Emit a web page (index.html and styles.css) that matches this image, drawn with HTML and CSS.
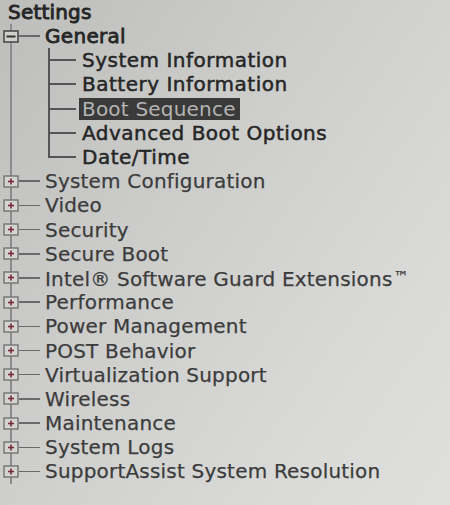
FILE: index.html
```html
<!DOCTYPE html>
<html lang="en">
<head>
<meta charset="utf-8">
<title>Settings</title>
<link rel="stylesheet" href="styles.css">
</head>
<body>
<div class="tree">
  <div class="title">Settings</div>
  <ul class="root">
    <li class="group">
      <div class="row">
        <svg class="box" width="16" height="13" viewBox="0 0 16 13"><rect x="1" y="1" width="14" height="11" fill="#cfd0ce" stroke="#4a4a4a" stroke-width="1.6"/><line x1="3.5" y1="6.5" x2="12.5" y2="6.5" stroke="#333" stroke-width="2"/></svg>
        <span class="hline"></span>
        <span class="label strong top">General</span>
      </div>
      <ul class="children">
        <li class="crow"><span class="conn"></span><span class="label strong">System Information</span></li>
        <li class="crow"><span class="conn"></span><span class="label strong">Battery Information</span></li>
        <li class="crow"><span class="conn"></span><span class="label sel">Boot Sequence</span></li>
        <li class="crow"><span class="conn"></span><span class="label strong">Advanced Boot Options</span></li>
        <li class="crow last"><span class="conn"></span><span class="label strong">Date/Time</span></li>
      </ul>
    </li>
    <li class="row"><svg class="box" width="16" height="13" viewBox="0 0 16 13"><rect x="1" y="1" width="14" height="11" fill="#d3d3d1" stroke="#737373" stroke-width="1.4"/><line x1="5" y1="6.5" x2="11" y2="6.5" stroke="#7a2a3a" stroke-width="1.6"/><line x1="8" y1="3.5" x2="8" y2="9.5" stroke="#7a2a3a" stroke-width="1.6"/></svg><span class="hline"></span><span class="label">System Configuration</span></li>
    <li class="row"><svg class="box" width="16" height="13" viewBox="0 0 16 13"><rect x="1" y="1" width="14" height="11" fill="#d3d3d1" stroke="#737373" stroke-width="1.4"/><line x1="5" y1="6.5" x2="11" y2="6.5" stroke="#7a2a3a" stroke-width="1.6"/><line x1="8" y1="3.5" x2="8" y2="9.5" stroke="#7a2a3a" stroke-width="1.6"/></svg><span class="hline"></span><span class="label">Video</span></li>
    <li class="row"><svg class="box" width="16" height="13" viewBox="0 0 16 13"><rect x="1" y="1" width="14" height="11" fill="#d3d3d1" stroke="#737373" stroke-width="1.4"/><line x1="5" y1="6.5" x2="11" y2="6.5" stroke="#7a2a3a" stroke-width="1.6"/><line x1="8" y1="3.5" x2="8" y2="9.5" stroke="#7a2a3a" stroke-width="1.6"/></svg><span class="hline"></span><span class="label">Security</span></li>
    <li class="row"><svg class="box" width="16" height="13" viewBox="0 0 16 13"><rect x="1" y="1" width="14" height="11" fill="#d3d3d1" stroke="#737373" stroke-width="1.4"/><line x1="5" y1="6.5" x2="11" y2="6.5" stroke="#7a2a3a" stroke-width="1.6"/><line x1="8" y1="3.5" x2="8" y2="9.5" stroke="#7a2a3a" stroke-width="1.6"/></svg><span class="hline"></span><span class="label">Secure Boot</span></li>
    <li class="row"><svg class="box" width="16" height="13" viewBox="0 0 16 13"><rect x="1" y="1" width="14" height="11" fill="#d3d3d1" stroke="#737373" stroke-width="1.4"/><line x1="5" y1="6.5" x2="11" y2="6.5" stroke="#7a2a3a" stroke-width="1.6"/><line x1="8" y1="3.5" x2="8" y2="9.5" stroke="#7a2a3a" stroke-width="1.6"/></svg><span class="hline"></span><span class="label">Intel® Software Guard Extensions<span class="tm">™</span></span></li>
    <li class="row"><svg class="box" width="16" height="13" viewBox="0 0 16 13"><rect x="1" y="1" width="14" height="11" fill="#d3d3d1" stroke="#737373" stroke-width="1.4"/><line x1="5" y1="6.5" x2="11" y2="6.5" stroke="#7a2a3a" stroke-width="1.6"/><line x1="8" y1="3.5" x2="8" y2="9.5" stroke="#7a2a3a" stroke-width="1.6"/></svg><span class="hline"></span><span class="label">Performance</span></li>
    <li class="row"><svg class="box" width="16" height="13" viewBox="0 0 16 13"><rect x="1" y="1" width="14" height="11" fill="#d3d3d1" stroke="#737373" stroke-width="1.4"/><line x1="5" y1="6.5" x2="11" y2="6.5" stroke="#7a2a3a" stroke-width="1.6"/><line x1="8" y1="3.5" x2="8" y2="9.5" stroke="#7a2a3a" stroke-width="1.6"/></svg><span class="hline"></span><span class="label">Power Management</span></li>
    <li class="row"><svg class="box" width="16" height="13" viewBox="0 0 16 13"><rect x="1" y="1" width="14" height="11" fill="#d3d3d1" stroke="#737373" stroke-width="1.4"/><line x1="5" y1="6.5" x2="11" y2="6.5" stroke="#7a2a3a" stroke-width="1.6"/><line x1="8" y1="3.5" x2="8" y2="9.5" stroke="#7a2a3a" stroke-width="1.6"/></svg><span class="hline"></span><span class="label">POST Behavior</span></li>
    <li class="row"><svg class="box" width="16" height="13" viewBox="0 0 16 13"><rect x="1" y="1" width="14" height="11" fill="#d3d3d1" stroke="#737373" stroke-width="1.4"/><line x1="5" y1="6.5" x2="11" y2="6.5" stroke="#7a2a3a" stroke-width="1.6"/><line x1="8" y1="3.5" x2="8" y2="9.5" stroke="#7a2a3a" stroke-width="1.6"/></svg><span class="hline"></span><span class="label">Virtualization Support</span></li>
    <li class="row"><svg class="box" width="16" height="13" viewBox="0 0 16 13"><rect x="1" y="1" width="14" height="11" fill="#d3d3d1" stroke="#737373" stroke-width="1.4"/><line x1="5" y1="6.5" x2="11" y2="6.5" stroke="#7a2a3a" stroke-width="1.6"/><line x1="8" y1="3.5" x2="8" y2="9.5" stroke="#7a2a3a" stroke-width="1.6"/></svg><span class="hline"></span><span class="label">Wireless</span></li>
    <li class="row"><svg class="box" width="16" height="13" viewBox="0 0 16 13"><rect x="1" y="1" width="14" height="11" fill="#d3d3d1" stroke="#737373" stroke-width="1.4"/><line x1="5" y1="6.5" x2="11" y2="6.5" stroke="#7a2a3a" stroke-width="1.6"/><line x1="8" y1="3.5" x2="8" y2="9.5" stroke="#7a2a3a" stroke-width="1.6"/></svg><span class="hline"></span><span class="label">Maintenance</span></li>
    <li class="row"><svg class="box" width="16" height="13" viewBox="0 0 16 13"><rect x="1" y="1" width="14" height="11" fill="#d3d3d1" stroke="#737373" stroke-width="1.4"/><line x1="5" y1="6.5" x2="11" y2="6.5" stroke="#7a2a3a" stroke-width="1.6"/><line x1="8" y1="3.5" x2="8" y2="9.5" stroke="#7a2a3a" stroke-width="1.6"/></svg><span class="hline"></span><span class="label">System Logs</span></li>
    <li class="row"><svg class="box" width="16" height="13" viewBox="0 0 16 13"><rect x="1" y="1" width="14" height="11" fill="#d3d3d1" stroke="#737373" stroke-width="1.4"/><line x1="5" y1="6.5" x2="11" y2="6.5" stroke="#7a2a3a" stroke-width="1.6"/><line x1="8" y1="3.5" x2="8" y2="9.5" stroke="#7a2a3a" stroke-width="1.6"/></svg><span class="hline"></span><span class="label">SupportAssist System Resolution</span></li>
  </ul>
</div>
</body>
</html>
```

FILE: styles.css
```css
html, body {
  margin: 0;
  padding: 0;
  height: 100%;
}
body {
  background: linear-gradient(125deg, #bdbebc 0%, #cdcecc 40%, #d9dad8 75%, #dfe0de 100%);
  font-family: "DejaVu Sans", sans-serif;
  font-size: 20px;
  color: #383838;
  overflow: hidden;
}
.tree {
  padding-top: 1px;
}
.title {
  height: 23px;
  line-height: 23px;
  padding-left: 8px;
  color: #262626;
  letter-spacing: 0.2px;
  -webkit-text-stroke: 0.9px #262626;
}
ul {
  list-style: none;
  margin: 0;
  padding: 0;
}
.root {
  margin-left: 10px;
  border-left: 2px solid #8c8c8c;
  width: 430px;
}
.row {
  display: flex;
  align-items: center;
  height: 24.2px;
}
.box {
  flex: none;
  margin-left: -9px;
  display: block;
}
.hline {
  flex: none;
  width: 21px;
  height: 1.5px;
  background: #6a6a6a;
  margin-right: 5px;
}
.label {
  white-space: nowrap;
  line-height: 22px;
  color: #3c3c3c;
  letter-spacing: 0.2px;
  -webkit-text-stroke: 0.25px #3c3c3c;
}
.label.strong {
  color: #262626;
  letter-spacing: 0.5px;
  -webkit-text-stroke: 0.5px #262626;
}
.label.top {
  letter-spacing: 0.3px;
  -webkit-text-stroke: 0.8px #262626;
}
.tm {
  font-size: 15px;
  vertical-align: 4px;
  letter-spacing: 0;
  margin-left: 1px;
}
.children {
  margin-left: 36px;
}
.crow {
  display: flex;
  align-items: center;
  height: 24.2px;
}
.conn {
  flex: none;
  width: 28px;
  align-self: stretch;
  margin-right: 6px;
  background:
    linear-gradient(#555, #555) left top / 2px 100% no-repeat,
    linear-gradient(#555, #555) left center / 100% 2px no-repeat;
}
.crow.last .conn {
  background:
    linear-gradient(#555, #555) left top / 2px 50% no-repeat,
    linear-gradient(#555, #555) left center / 100% 2px no-repeat;
}
.label.sel {
  background: #3a3a3a;
  color: #b4b4b4;
  letter-spacing: 0.2px;
  -webkit-text-stroke: 0;
  padding: 0 4px 0 3px;
  margin-left: -3px;
  line-height: 22px;
}
```
